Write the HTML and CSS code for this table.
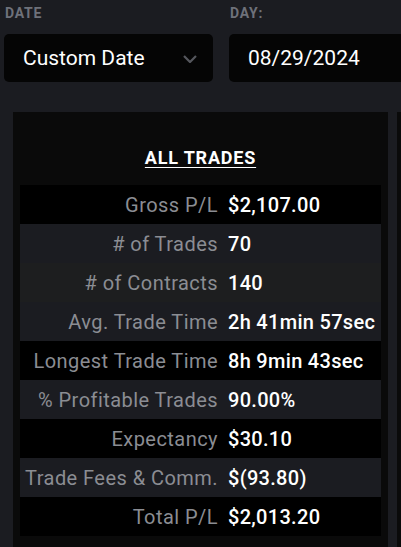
FILE: index.html
```html
<!DOCTYPE html>
<html>
<head>
<meta charset="utf-8">
<link rel="stylesheet" href="styles.css">
</head>
<body>
<div class="filters">
  <div class="field field-date">
    <div class="field-label">DATE</div>
    <div class="select">
      <span class="select-text">Custom Date</span>
      <svg class="chev" width="14" height="8" viewBox="0 0 14 8"><path d="M1 1 L7 7 L13 1" fill="none" stroke="#55575d" stroke-width="2.2"/></svg>
    </div>
  </div>
  <div class="field field-day">
    <div class="field-label">DAY:</div>
    <div class="input"><span class="input-text">08/29/2024</span></div>
  </div>
</div>
<div class="panels">
  <div class="panel">
    <h2 class="panel-title">ALL TRADES</h2>
    <div class="stats">
      <div class="row dark"><span class="lbl">Gross P/L</span><span class="val">$2,107.00</span></div>
      <div class="row grey"><span class="lbl"># of Trades</span><span class="val">70</span></div>
      <div class="row hover"><span class="lbl"># of Contracts</span><span class="val">140</span></div>
      <div class="row grey"><span class="lbl">Avg. Trade Time</span><span class="val">2h 41min 57sec</span></div>
      <div class="row dark"><span class="lbl">Longest Trade Time</span><span class="val">8h 9min 43sec</span></div>
      <div class="row grey"><span class="lbl">% Profitable Trades</span><span class="val">90.00%</span></div>
      <div class="row dark"><span class="lbl">Expectancy</span><span class="val">$30.10</span></div>
      <div class="row grey"><span class="lbl">Trade Fees &amp; Comm.</span><span class="val">$(93.80)</span></div>
      <div class="row dark"><span class="lbl">Total P/L</span><span class="val">$2,013.20</span></div>
    </div>
  </div>
  <div class="panel panel-next"></div>
</div>
</body>
</html>
```
FILE: styles.css
```css
html, body {
  margin: 0;
  padding: 0;
  background: #1b1c21;
  overflow: hidden;
  height: 547px;
  width: 401px;
  font-family: Roboto, "Liberation Sans", sans-serif;
}
.filters {
  display: flex;
  gap: 16px;
  padding: 5px 0 0 4px;
  overflow: hidden;
}
.field-date { width: 209px; flex: none; }
.field-day { width: 172px; flex: none; }
.field-label {
  font-size: 14px;
  line-height: 16px;
  font-weight: 700;
  letter-spacing: 0.8px;
  color: #6e717a;
  padding-left: 1px;
  margin-bottom: 13px;
}
.select, .input {
  height: 48px;
  background: #050505;
  border-radius: 5px;
  display: flex;
  align-items: center;
  box-sizing: border-box;
}
.select { padding: 0 16px 0 19px; justify-content: space-between; }
.input { padding-left: 19px; border-radius: 5px 0 0 5px; }
.select-text, .input-text {
  color: #ffffff;
  font-size: 21px;
}
.chev { margin-top: 2px; }
.panels {
  display: flex;
  gap: 9px;
  margin-top: 30px;
  padding-left: 13px;
}
.panel {
  width: 375px;
  flex: none;
  height: 440px;
  background: #0a0a0a;
  padding: 0 7px;
  box-sizing: border-box;
}
.panel-next { width: 4px; padding: 0; }
.panel-title {
  margin: 0;
  padding: 36px 0 17px;
  text-align: center;
  color: #ffffff;
  font-size: 18px;
  line-height: 20px;
  font-weight: 700;
  text-decoration: underline;
  text-underline-offset: 3px;
  letter-spacing: 0.8px;
}
.row {
  display: grid;
  grid-template-columns: 198px 1fr;
  column-gap: 10px;
  height: 39px;
  align-items: center;
  font-size: 20px;
}
.dark { background: #000000; }
.grey { background: #1b1c21; }
.hover { background: #1d1e1f; }
.lbl {
  text-align: right;
  color: #8b8d93;
  white-space: nowrap;
  letter-spacing: 0.45px;
}
.val {
  color: #ffffff;
  font-weight: 500;
  white-space: nowrap;
  letter-spacing: 0.3px;
}
```
